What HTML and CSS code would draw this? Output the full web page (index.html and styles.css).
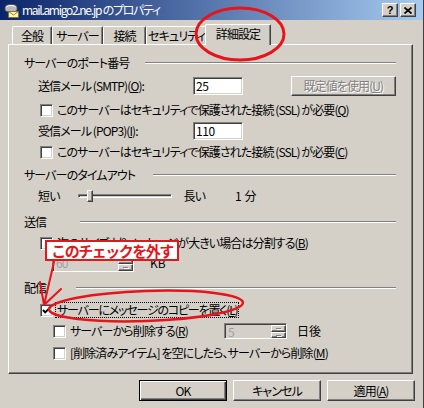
FILE: index.html
```html
<!DOCTYPE html>
<html lang="ja">
<head>
<meta charset="utf-8">
<title>mail.amigo2.ne.jp のプロパティ</title>
<link rel="stylesheet" href="styles.css">
</head>
<body>
<div class="window">
  <div class="titlebar">
    <svg class="title-icon" viewBox="0 0 16 16" aria-hidden="true">
      <path d="M2 5.5 Q2 2.5 8 2.5 Q14 2.5 14 5.5 L14 7.5 Q14 10 8 10 Q2 10 2 7.5 Z" fill="#b8b8b8" stroke="#505050" stroke-width="0.8"/>
      <path d="M3.5 5 Q5 3.5 8 3.5 Q12 3.5 12.5 5" fill="none" stroke="#fff" stroke-width="1"/>
      <rect x="5.5" y="9.5" width="10" height="6" fill="#fff6b0" stroke="#7a6a20" stroke-width="0.8"/>
      <path d="M5.5 9.5 L10.5 13 L15.5 9.5" fill="none" stroke="#7a6a20" stroke-width="0.8"/>
    </svg>
    <span class="title-text">mail.amigo2.ne.jp のプロパティ</span>
    <div class="caption-buttons">
      <span class="cap-btn">?</span>
      <span class="cap-btn">
        <svg class="cap-x" viewBox="0 0 8 7" aria-hidden="true"><path d="M0.5 0.5 L7.5 6.5 M7.5 0.5 L0.5 6.5" stroke="#000" stroke-width="1.7"/></svg>
      </span>
    </div>
  </div>

  <div class="tabs">
    <div class="tab tab--general">全般</div>
    <div class="tab tab--server">サーバー</div>
    <div class="tab tab--connect">接続</div>
    <div class="tab tab--security">セキュリティ</div>
    <div class="tab tab--active">詳細設定</div>
  </div>

  <div class="panel">
    <div class="group-head mt10">
      <span class="group-label gl-ports">サーバーのポート番号</span>
      <span class="group-line"></span>
    </div>

    <div class="row row--20 mt5 ind-label">
      <span class="field-label">送信メール (SMTP)(<u>O</u>):</span>
      <span class="field">25</span>
      <span class="btn btn--disabled btn--default-value">既定値を使用(<u>U</u>)</span>
    </div>

    <div class="row mt5 ind-check">
      <span class="check"></span>
      <span class="check-label">このサーバーはセキュリティで保護された接続 (SSL) が必要(<u>Q</u>)</span>
    </div>

    <div class="row mt3 ind-label">
      <span class="field-label">受信メール (POP3)(<u>I</u>):</span>
      <span class="field">110</span>
    </div>

    <div class="row mt3 ind-check">
      <span class="check"></span>
      <span class="check-label">このサーバーはセキュリティで保護された接続 (SSL) が必要(<u>C</u>)</span>
    </div>

    <div class="group-head mt6">
      <span class="group-label gl-timeout">サーバーのタイムアウト</span>
      <span class="group-line"></span>
    </div>

    <div class="row mt4 ind-label">
      <span class="slider-label">短い</span>
      <span class="slider">
        <span class="slider-track"></span>
        <span class="slider-thumb"></span>
      </span>
      <span class="slider-label slider-label--long">長い</span>
      <span class="timeout-value">1 分</span>
    </div>

    <div class="group-head mt9">
      <span class="group-label gl-send">送信</span>
      <span class="group-line"></span>
    </div>

    <div class="row mt4 ind-check">
      <span class="check"></span>
      <span class="check-label">次のサイズよりメッセージが大きい場合は分割する(<u>B</u>)</span>
    </div>

    <div class="row mt2 ind-spin">
      <span class="spin spin--size">
        <span class="spin-value">60</span>
        <span class="spin-btns"><span class="spin-btn spin-btn--up"></span><span class="spin-btn spin-btn--down"></span></span>
      </span>
      <span class="unit">KB</span>
    </div>

    <div class="group-head mt8">
      <span class="group-label gl-delivery">配信</span>
      <span class="group-line"></span>
    </div>

    <div class="row mt5 ind-check">
      <span class="check">
        <svg class="checkmark" viewBox="0 0 11 11" aria-hidden="true"><path d="M2 5 L4.2 7.4 L9 2.6" fill="none" stroke="#000" stroke-width="2"/></svg>
      </span>
      <span class="check-label check-label--focus">サーバーにメッセージのコピーを置く(<u>L</u>)</span>
    </div>

    <div class="row mt3 ind-sub">
      <span class="check"></span>
      <span class="check-label check-label--delete">サーバーから削除する(<u>R</u>)</span>
      <span class="spin spin--days">
        <span class="spin-value">5</span>
        <span class="spin-btns"><span class="spin-btn spin-btn--up"></span><span class="spin-btn spin-btn--down"></span></span>
      </span>
      <span class="unit unit--days">日後</span>
    </div>

    <div class="row mt4 ind-sub">
      <span class="check"></span>
      <span class="check-label">[削除済みアイテム] を空にしたら、サーバーから削除(<u>M</u>)</span>
    </div>
  </div>

  <div class="footer">
    <span class="btn btn--default">OK</span>
    <span class="btn">キャンセル</span>
    <span class="btn">適用(<u>A</u>)</span>
  </div>

  <svg class="annotations" viewBox="0 0 424 408" aria-hidden="true">
    <ellipse cx="240" cy="34" rx="44" ry="26" fill="none" stroke="#e8141c" stroke-width="3"/>
    <ellipse cx="146" cy="306" rx="97" ry="15" transform="rotate(-2 146 306)" fill="none" stroke="#e8141c" stroke-width="2.5"/>
    <path d="M54 262 L44 305 M40 282 L44 305 M61 289 L44 305" fill="none" stroke="#e8141c" stroke-width="2" stroke-linecap="round"/>
  </svg>
  <div class="callout">このチェックを外す</div>
</div>
</body>
</html>
```

FILE: styles.css
```css
* { box-sizing: border-box; }
html, body { margin: 0; padding: 0; }
body {
  background: #d4d0c8;
  font-family: "Noto Sans CJK JP", "Noto Sans", sans-serif;
  font-size: 12px;
  line-height: 16px;
  color: #000;
  font-feature-settings: "palt" 1;
  letter-spacing: -0.9px;
}
u { text-decoration: underline; text-underline-offset: 1px; }

.window {
  position: relative;
  width: 424px;
  height: 408px;
  overflow: hidden;
  background: #d4d0c8;
  border-right: 1px solid #404040;
}

/* title bar */
.titlebar {
  height: 20px;
  display: flex;
  align-items: center;
  padding: 0 7px 0 3px;
  background: linear-gradient(to right, #0a246a, #a6caf0);
  color: #fff;
}
.title-icon { width: 16px; height: 16px; flex: none; }
.title-text { margin-left: 3px; flex: 1; white-space: nowrap; letter-spacing: -1.3px; }
.caption-buttons { display: flex; gap: 2px; }
.cap-btn {
  width: 16px;
  height: 14px;
  display: flex;
  align-items: center;
  justify-content: center;
  background: #d4d0c8;
  border: 1px solid;
  border-color: #fff #404040 #404040 #fff;
  box-shadow: inset -1px -1px #808080;
  color: #000;
  font-family: "Liberation Sans", sans-serif;
  font-weight: bold;
  font-size: 11px;
  line-height: 12px;
  letter-spacing: 0;
}
.cap-x { width: 8px; height: 7px; display: block; }

/* tabs */
.tabs {
  display: flex;
  align-items: flex-end;
  height: 24px;
  padding-left: 12px;
}
.tab {
  height: 18px;
  display: flex;
  align-items: center;
  justify-content: center;
  white-space: nowrap;
  border: 1px solid;
  border-bottom: none;
  border-color: #fff #404040 transparent #fff;
  box-shadow: inset -1px 0 #808080;
  border-radius: 2px 2px 0 0;
  background: #d4d0c8;
}
.tab--general { width: 40px; }
.tab--server { width: 51px; }
.tab--connect { width: 43px; }
.tab--security { width: 61px; }
.tab--active {
  width: 66px;
  height: 21px;
  margin: 0 -2px -1px;
  position: relative;
  z-index: 1;
  padding-bottom: 2px;
}

/* panel */
.panel {
  margin: 0 10px 0 8px;
  height: 330px;
  border: 1px solid;
  border-color: #fff #404040 #404040 #fff;
  box-shadow: inset -1px -1px #808080;
  padding: 0 16px 0 15px;
  display: flex;
  flex-direction: column;
}

.mt2 { margin-top: 2px; }
.mt3 { margin-top: 3px; }
.mt4 { margin-top: 4px; }
.mt5 { margin-top: 5px; }
.mt6 { margin-top: 6px; }
.mt8 { margin-top: 8px; }
.mt9 { margin-top: 9px; }
.mt10 { margin-top: 10px; }

.group-head { display: flex; align-items: center; height: 16px; }
.group-label { white-space: nowrap; flex: none; }
.gl-ports { width: 121px; }
.gl-timeout { width: 129px; }
.gl-send { width: 56px; }
.gl-delivery { width: 52px; }
.group-line {
  flex: 1;
  height: 2px;
  border-top: 1px solid #808080;
  border-bottom: 1px solid #fff;
}

.row { display: flex; align-items: center; height: 18px; white-space: nowrap; }
.row--20 { height: 20px; }
.ind-label { padding-left: 14px; }
.ind-check { padding-left: 16px; }
.ind-spin { padding-left: 28px; }
.ind-sub { padding-left: 29px; }

.field-label { width: 155px; flex: none; }
.field {
  width: 50px;
  height: 18px;
  padding-left: 2px;
  background: #fff;
  border: 1px solid;
  border-color: #808080 #fff #fff #808080;
  box-shadow: inset 1px 1px #404040, inset -1px -1px #d4d0c8;
  line-height: 16px;
  letter-spacing: -0.4px;
}

.btn {
  width: 88px;
  height: 21px;
  display: flex;
  align-items: center;
  justify-content: center;
  background: #d4d0c8;
  border: 1px solid;
  border-color: #fff #404040 #404040 #fff;
  box-shadow: inset -1px -1px #808080;
  white-space: nowrap;
}
.btn--default {
  border-color: #000;
  box-shadow: inset 1px 1px #fff, inset -1px -1px #404040, inset -2px -2px #808080;
}
.btn--disabled { color: #808080; text-shadow: 1px 1px #fff; }
.btn--default-value { width: 106px; height: 20px; margin-left: 48px; }

.check {
  width: 13px;
  height: 13px;
  flex: none;
  background: #fff;
  border: 1px solid;
  border-color: #808080 #fff #fff #808080;
  box-shadow: inset 1px 1px #404040, inset -1px -1px #d4d0c8;
  padding: 0;
}
.checkmark { width: 11px; height: 11px; display: block; }
.check-label { margin-left: 4px; }
.check-label--focus {
  margin-left: 2px;
  padding: 0 1px;
  border: 1px dotted #000;
  line-height: 14px;
  letter-spacing: -1.2px;
}
.check-label--delete { width: 154px; flex: none; }

/* slider */
.slider-label { flex: none; }
.slider {
  position: relative;
  width: 94px;
  height: 14px;
  margin: 0 12px 0 18px;
  display: flex;
  align-items: center;
}
.slider-track {
  width: 100%;
  height: 4px;
  border: 1px solid;
  border-color: #808080 #fff #fff #808080;
  box-shadow: inset 1px 1px #404040;
}
.slider-thumb {
  position: absolute;
  left: 9px;
  top: 1px;
  width: 6px;
  height: 12px;
  background: #d4d0c8;
  border: 1px solid;
  border-color: #fff #404040 #404040 #fff;
  box-shadow: inset -1px -1px #808080;
}
.timeout-value { margin-left: 30px; letter-spacing: 0; }

/* spinner */
.spin {
  display: flex;
  height: 18px;
  background: #d4d0c8;
  border: 1px solid;
  border-color: #808080 #fff #fff #808080;
  box-shadow: inset 1px 1px #404040;
  padding: 1px 0 0 1px;
}
.spin--size { width: 82px; }
.spin--days { width: 63px; height: 16px; }
.spin-value { flex: 1; color: #a0a0a0; padding-left: 2px; line-height: 14px; }
.spin-btns { width: 15px; display: flex; flex-direction: column; }
.spin-btn {
  flex: 1;
  position: relative;
  background: #d4d0c8;
  border: 1px solid;
  border-color: #fff #404040 #404040 #fff;
  box-shadow: inset -1px -1px #808080;
}
.spin-btn::after {
  content: "";
  position: absolute;
  left: 4px;
  top: 2px;
  width: 5px;
  height: 1px;
  background: #808080;
  box-shadow: 1px 1px #fff;
}
.unit { margin-left: 16px; letter-spacing: 0; }
.unit--days { margin-left: 10px; }

/* footer */
.footer {
  display: flex;
  justify-content: flex-end;
  gap: 6px;
  margin-top: 6px;
  padding-right: 8px;
}

/* annotations */
.annotations {
  position: absolute;
  left: 0;
  top: 0;
  width: 424px;
  height: 408px;
  z-index: 5;
  pointer-events: none;
}
.callout {
  position: absolute;
  left: 45px;
  top: 240px;
  width: 134px;
  height: 21px;
  z-index: 6;
  background: #fff;
  border: 2px solid #e8141c;
  color: #e8141c;
  font-size: 15px;
  font-weight: bold;
  line-height: 17px;
  letter-spacing: -1.5px;
  text-align: center;
  font-feature-settings: normal;
  white-space: nowrap;
}
```
